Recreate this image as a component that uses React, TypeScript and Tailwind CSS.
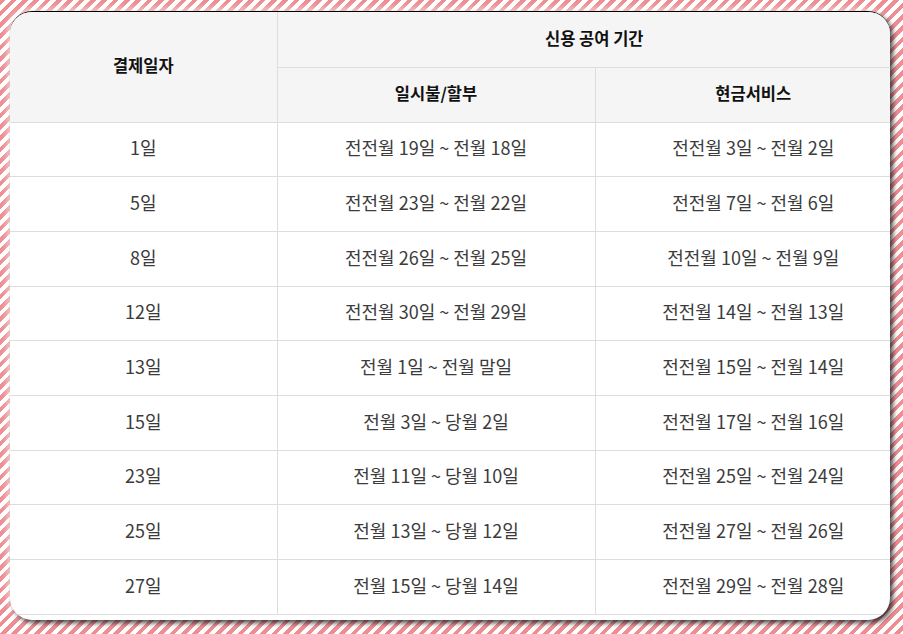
import React from "react";

const rows: [string, string, string][] = [
  ["1일", "전전월 19일 ~ 전월 18일", "전전월 3일 ~ 전월 2일"],
  ["5일", "전전월 23일 ~ 전월 22일", "전전월 7일 ~ 전월 6일"],
  ["8일", "전전월 26일 ~ 전월 25일", "전전월 10일 ~ 전월 9일"],
  ["12일", "전전월 30일 ~ 전월 29일", "전전월 14일 ~ 전월 13일"],
  ["13일", "전월 1일 ~ 전월 말일", "전전월 15일 ~ 전월 14일"],
  ["15일", "전월 3일 ~ 당월 2일", "전전월 17일 ~ 전월 16일"],
  ["23일", "전월 11일 ~ 당월 10일", "전전월 25일 ~ 전월 24일"],
  ["25일", "전월 13일 ~ 당월 12일", "전전월 27일 ~ 전월 26일"],
  ["27일", "전월 15일 ~ 당월 14일", "전전월 29일 ~ 전월 28일"],
];

export default function App() {
  return (
    <div
      className="h-[634px] w-[903px] pt-[11px] pl-[10px] bg-[repeating-linear-gradient(135deg,#ef8e92_0px,#ef8e92_4px,#ffffff_4px,#ffffff_8px)]"
      style={{ fontFamily: '"Noto Sans CJK KR", "Noto Sans", sans-serif' }}
    >
      <div className="w-[880px] h-[609px] bg-white rounded-[22px] border-t border-black overflow-hidden shadow-[3px_3px_5px_rgba(0,0,0,0.7),-2px_-2px_6px_rgba(255,255,255,0.7)]">
        <table className="w-[901px] table-fixed border-collapse">
          <colgroup>
            <col className="w-[267px]" />
            <col className="w-[318px]" />
            <col className="w-[316px]" />
          </colgroup>
          <thead className="bg-[#f5f5f5] text-[16.5px] font-bold text-[#111]">
            <tr className="h-[55px]">
              <th rowSpan={2} className="border-r border-b border-[#dddddd] font-bold pb-[2px]">
                결제일자
              </th>
              <th colSpan={2} className="border-b border-[#dddddd] font-bold pb-[2px]">
                신용 공여 기간
              </th>
            </tr>
            <tr className="h-[55px]">
              <th className="border-r border-b border-[#dddddd] font-bold pb-[2px]">일시불/할부</th>
              <th className="border-b border-[#dddddd] font-bold pb-[2px]">현금서비스</th>
            </tr>
          </thead>
          <tbody className="text-[18px] text-[#3c3c3c]">
            {rows.map(([day, pay, cash]) => (
              <tr key={day} className="h-[54.7px]">
                <td className="text-center border-r border-b border-[#dddddd] pb-[3px]">{day}</td>
                <td className="text-center border-r border-b border-[#dddddd] pb-[3px]">{pay}</td>
                <td className="text-center border-b border-[#dddddd] pb-[3px]">{cash}</td>
              </tr>
            ))}
          </tbody>
        </table>
      </div>
    </div>
  );
}
